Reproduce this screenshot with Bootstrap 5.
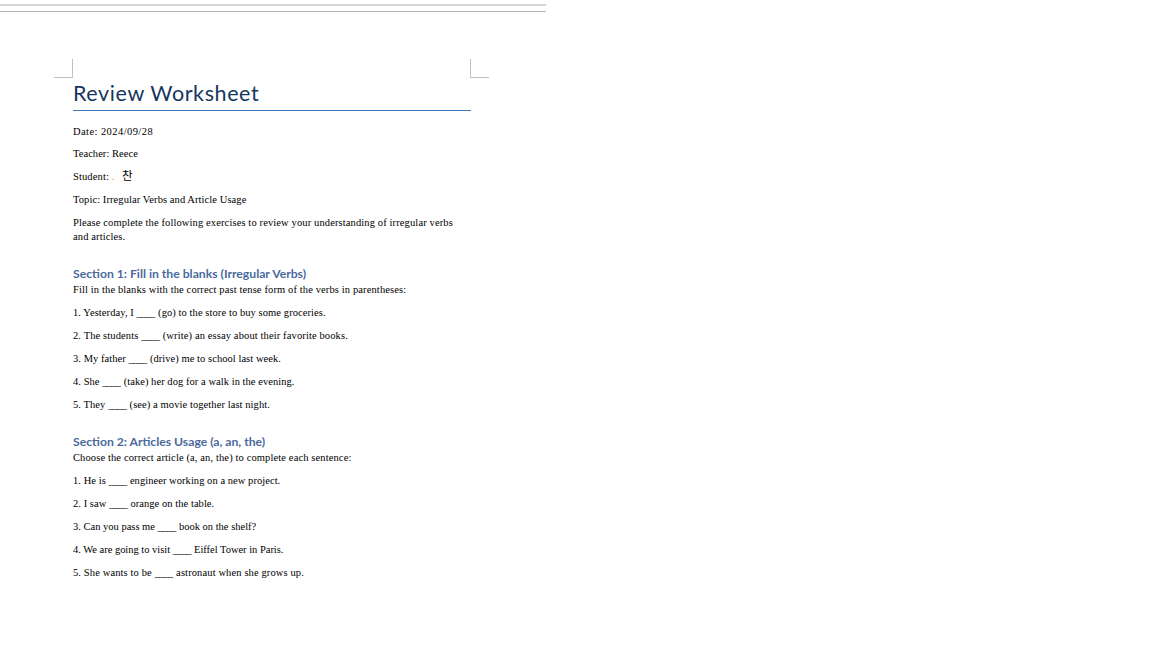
<!DOCTYPE html>
<html lang="en">
<head>
<meta charset="utf-8">
<title>Review Worksheet</title>
<link href="https://cdn.jsdelivr.net/npm/bootstrap@5.3.0/dist/css/bootstrap.min.css" rel="stylesheet">
<style>
html,body{background:#fff;height:668px;overflow:hidden}
.doc-view{width:546px}
.ruler-bar{height:12px;padding-top:4px;border-bottom:1px solid #b4b4b4}
.ruler-strip{height:2px;background:#d4d4d4}
.sheet{position:relative;padding:47px 75px 0 73px;height:656px}
.crop-mark{position:absolute;top:47px;width:19px;height:19px;border-bottom:1px solid #c0c0c0}
.crop-left{left:54px;border-right:1px solid #c0c0c0}
.crop-right{left:470px;border-left:1px solid #c0c0c0}
.doc-title{font-family:Lato,"Noto Sans",sans-serif;font-size:21.5px;font-weight:400;line-height:27px;letter-spacing:.6px;color:#17365d;margin:21px 0 0;padding-bottom:3px;border-bottom:1px solid #3f78c0;white-space:nowrap}
.doc-line{font-family:"Liberation Serif",serif;font-size:10.5px;line-height:14px;color:#000;margin:0 0 9px;letter-spacing:.12px}
.doc-first{margin-top:14px;margin-bottom:8px;letter-spacing:.43px}
.doc-wrap{margin-bottom:0}
.doc-head{font-family:Lato,"Noto Sans",sans-serif;font-size:12.2px;font-weight:700;line-height:15px;color:#4a6a9c;margin:0 0 2px}
.head-one{margin-top:22px}
.head-two{margin-top:22px}
.ko{font-family:"Noto Sans CJK KR",sans-serif;font-size:11.5px;line-height:1;margin-left:2px}
.name-dot{color:#e08a3c}
.fill-blank{letter-spacing:-.75px;margin-right:.75px}
.tight-a{letter-spacing:.08px}
.tight-b{letter-spacing:.05px}
.tight-c{letter-spacing:0}
.tight-d{letter-spacing:-.02px}
</style>
</head>
<body>
<div class="doc-view">
  <div class="ruler-bar"><div class="ruler-strip"></div></div>
  <div class="sheet">
    <div class="crop-mark crop-left"></div>
    <div class="crop-mark crop-right"></div>
    <h1 class="doc-title">Review Worksheet</h1>
    <p class="doc-line doc-first">Date: 2024/09/28</p>
    <p class="doc-line tight-b">Teacher: Reece</p>
    <p class="doc-line">Student: <span class="name-dot">.</span>&nbsp; <span class="ko">찬</span></p>
    <p class="doc-line tight-a">Topic: Irregular Verbs and Article Usage</p>
    <p class="doc-line doc-wrap">Please complete the following exercises to review your understanding of irregular verbs and articles.</p>
    <h2 class="doc-head head-one">Section 1: Fill in the blanks (Irregular Verbs)</h2>
    <p class="doc-line">Fill in the blanks with the correct past tense form of the verbs in parentheses:</p>
    <p class="doc-line tight-a">1. Yesterday, I <span class="fill-blank">____</span> (go) to the store to buy some groceries.</p>
    <p class="doc-line">2. The students <span class="fill-blank">____</span> (write) an essay about their favorite books.</p>
    <p class="doc-line tight-b">3. My father <span class="fill-blank">____</span> (drive) me to school last week.</p>
    <p class="doc-line tight-b">4. She <span class="fill-blank">____</span> (take) her dog for a walk in the evening.</p>
    <p class="doc-line tight-a">5. They <span class="fill-blank">____</span> (see) a movie together last night.</p>
    <h2 class="doc-head head-two">Section 2: Articles Usage (a, an, the)</h2>
    <p class="doc-line">Choose the correct article (a, an, the) to complete each sentence:</p>
    <p class="doc-line tight-b">1. He is <span class="fill-blank">____</span> engineer working on a new project.</p>
    <p class="doc-line tight-b">2. I saw <span class="fill-blank">____</span> orange on the table.</p>
    <p class="doc-line tight-c">3. Can you pass me <span class="fill-blank">____</span> book on the shelf?</p>
    <p class="doc-line tight-d">4. We are going to visit <span class="fill-blank">____</span> Eiffel Tower in Paris.</p>
    <p class="doc-line">5. She wants to be <span class="fill-blank">____</span> astronaut when she grows up.</p>
  </div>
</div>
<script src="https://cdn.jsdelivr.net/npm/bootstrap@5.3.0/dist/js/bootstrap.bundle.min.js"></script>
</body>
</html>
